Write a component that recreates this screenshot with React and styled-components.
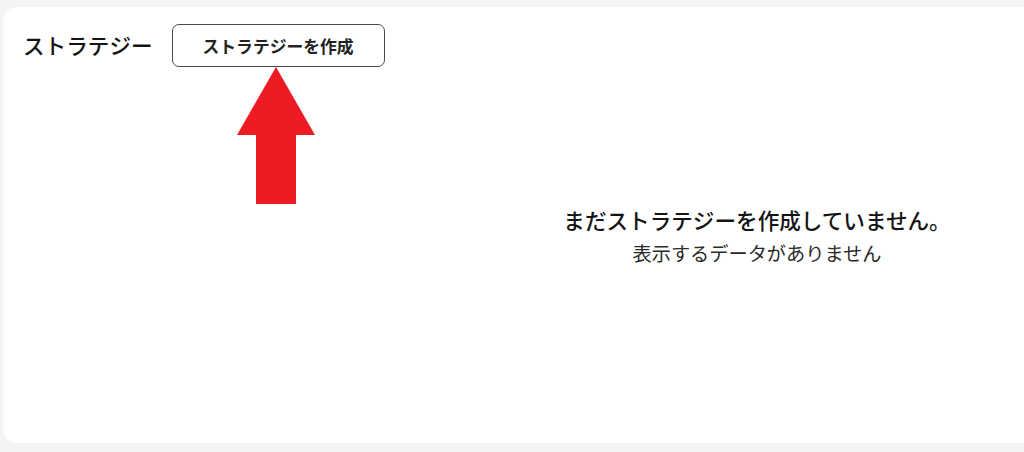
import styled, { createGlobalStyle } from "styled-components";

const GlobalStyle = createGlobalStyle`
  html, body {
    margin: 0;
    padding: 0;
    background: #f3f4f6;
    overflow: hidden;
  }
  body {
    font-family: "Noto Sans CJK JP", "Noto Sans", sans-serif;
    color: #1a1a1a;
  }
`;

const Page = () => (
  <StyledPage>
    <StyledCard>
      <StyledHeader>
        <StyledTitle>ストラテジー</StyledTitle>
        <StyledButtonWrap>
          <StyledCreateButton type="button">ストラテジーを作成</StyledCreateButton>
          <StyledArrow viewBox="0 0 78 137" aria-hidden="true">
            <path d="M39 0 L78 68 L59 68 L59 137 L19 137 L19 68 L0 68 Z" fill="#ed1c24" />
          </StyledArrow>
        </StyledButtonWrap>
      </StyledHeader>
      <StyledEmptyState>
        <StyledEmptyTitle>まだストラテジーを作成していません。</StyledEmptyTitle>
        <StyledEmptyText>表示するデータがありません</StyledEmptyText>
      </StyledEmptyState>
    </StyledCard>
  </StyledPage>
);

export default function App() {
  return (
    <>
      <GlobalStyle />
      <Page />
    </>
  );
}

//#region Styled Objects
const StyledPage = styled.div`
  width: 1024px;
  height: 452px;
  padding: 7px 0 9px 3px;
  box-sizing: border-box;
  overflow: hidden;
`;

const StyledCard = styled.section`
  height: 100%;
  margin-right: -30px;
  padding: 17px 0 0 20px;
  box-sizing: border-box;
  background: #ffffff;
  border-radius: 14px;
`;

const StyledHeader = styled.div`
  display: flex;
  flex-flow: row nowrap;
  align-items: center;
  gap: 19px;
`;

const StyledTitle = styled.h2`
  margin: 0;
  font-size: 21.6px;
  font-weight: 500;
  line-height: 1.4;
  color: #141414;
`;

const StyledButtonWrap = styled.div`
  position: relative;
`;

const StyledCreateButton = styled.button`
  width: 213px;
  height: 43px;
  padding: 0;
  border: 1px solid #4a4a4a;
  border-radius: 7px;
  background: #ffffff;
  font-family: inherit;
  font-size: 16.8px;
  font-weight: 700;
  color: #222222;
  cursor: pointer;
`;

const StyledArrow = styled.svg`
  position: absolute;
  left: 65px;
  top: 43px;
  width: 78px;
  height: 137px;
`;

const StyledEmptyState = styled.div`
  margin-top: 137px;
  padding-left: 437px;
  display: flex;
  flex-flow: column nowrap;
  align-items: center;
`;

const StyledEmptyTitle = styled.p`
  margin: 0 0 3px;
  font-size: 21.6px;
  font-weight: 500;
  line-height: 32.4px;
  color: #141414;
`;

const StyledEmptyText = styled.p`
  margin: 0;
  font-size: 19.2px;
  font-weight: 400;
  line-height: 28.8px;
  color: #2a2a2a;
`;
//#endregion
